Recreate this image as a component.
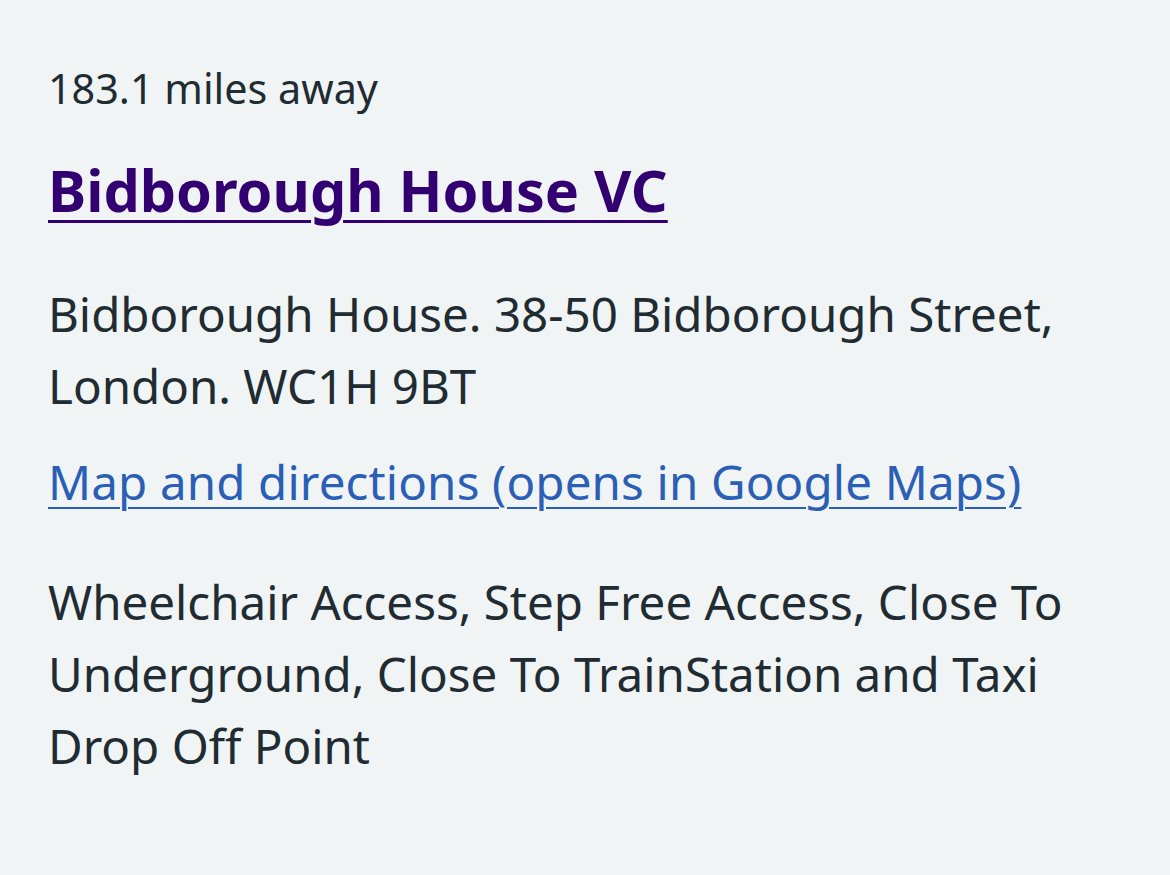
export default function App() {
  return (
    <div
      className="min-h-[875px] w-full bg-[#f0f4f5] px-[48px] pt-[60px] text-[#212b32]"
      style={{ fontFamily: '"Noto Sans", "Open Sans", sans-serif' }}
    >
      <p className="text-[41.3px] leading-[56px]">183.1 miles away</p>

      <h2 className="mt-[34px] text-[57.5px] font-bold leading-[80px]">
        <a
          href="#"
          className="text-[#330072] underline decoration-[3px] underline-offset-[8px]"
        >
          Bidborough House VC
        </a>
      </h2>

      <p className="mt-[48px] text-[47.5px] leading-[72px]">
        Bidborough House. 38-50 Bidborough Street,
        <br />
        London. WC1H 9BT
      </p>

      <p className="mt-[24px] text-[47.5px] leading-[72px]">
        <a
          href="#"
          className="text-[#2a5fb5] underline decoration-[2px] underline-offset-[7px] tracking-[0.15px]"
        >
          Map and directions (opens in Google Maps)
        </a>
      </p>

      <p className="mt-[48px] text-[47.5px] leading-[72px]">
        Wheelchair Access, Step Free Access, Close To Underground, Close To
        TrainStation and Taxi Drop Off Point
      </p>
    </div>
  );
}
